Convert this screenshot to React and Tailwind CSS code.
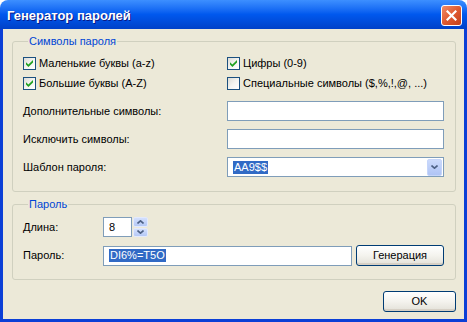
import React from "react";

const Check = ({ checked }) => (
  <span className="w-[13px] h-[13px] shrink-0 border border-[#1C5180] bg-gradient-to-br from-[#DCDCD7] via-[#F4F4F0] to-white flex items-center justify-center">
    {checked && (
      <svg width="7" height="7" viewBox="0 0 7 7">
        <path d="M0 2.2 L2.4 4.4 L7 0 V2.4 L2.4 7 L0 4.6 Z" fill="#21A121" />
      </svg>
    )}
  </span>
);

const CheckRow = ({ checked, label }) => (
  <div className="h-[20px] flex items-center gap-[3px]">
    <Check checked={checked} />
    <span className="leading-[13px] whitespace-nowrap">{label}</span>
  </div>
);

const TextBox = ({ children, className = "" }) => (
  <div
    className={`h-[20px] border border-[#7F9DB9] bg-white flex items-center pl-[5px] ${className}`}
  >
    {children}
  </div>
);

const Selected = ({ children }) => (
  <span className="bg-[#316AC5] text-white leading-[13px] px-[1px]">
    {children}
  </span>
);

const XpButton = ({ children, className = "" }) => (
  <button
    className={`h-[21px] border border-[#003C74] rounded-[3px] bg-gradient-to-b from-white via-[#F4F3EE] to-[#E3E1D8] shadow-[inset_0_-2px_0_#D6D0C5] text-[11px] leading-[13px] text-black ${className}`}
  >
    {children}
  </button>
);

const Chevron = ({ up }) => (
  <svg width="7" height="4" viewBox="0 0 7 4">
    <path
      d={up ? "M0.5 3.5 L3.5 0.8 L6.5 3.5" : "M0.5 0.5 L3.5 3.2 L6.5 0.5"}
      fill="none"
      stroke="#4D6185"
      strokeWidth="1.6"
    />
  </svg>
);

export default function App() {
  return (
    <div className="w-[467px] h-[322px] bg-white font-['Liberation_Sans',Arial,sans-serif]">
      <div className="h-full flex flex-col">
        {/* title bar */}
        <div className="h-[29px] shrink-0 rounded-t-[8px] bg-gradient-to-b from-[#3D8FFF] via-[#0058EE] to-[#0041C8] flex items-start justify-between pl-[7px] pr-[5px]">
          <span className="mt-[8px] text-[13px] leading-[15px] font-bold text-white [text-shadow:1px_1px_0_#0A1883]">
            Генератор паролей
          </span>
          <div className="mt-[5px] w-[21px] h-[21px] rounded-[3px] border border-white bg-gradient-to-br from-[#F08B66] via-[#E05A30] to-[#C4401A] flex items-center justify-center">
            <svg width="11" height="11" viewBox="0 0 11 11">
              <path d="M1.5 1.5 L9.5 9.5 M9.5 1.5 L1.5 9.5" stroke="white" strokeWidth="2.2" strokeLinecap="square" />
            </svg>
          </div>
        </div>

        {/* body */}
        <div className="flex-1 bg-[#ECE9D8] border-x-[3px] border-b-[3px] border-[#0B3FD6] flex flex-col pl-[9px] pr-[8px] pt-[6px] text-[11px] text-black">
          <fieldset className="border border-[#D0D0BF] rounded-[3px] pl-[10px] pr-[11px] pt-[5px] pb-[14px]">
            <legend className="ml-[5px] px-[1px] leading-[13px] text-[#0046D5]">
              Символы пароля
            </legend>
            <div className="grid grid-cols-[204px_1fr]">
              <CheckRow checked label="Маленькие буквы (a-z)" />
              <CheckRow checked label="Цифры (0-9)" />
              <CheckRow checked label="Большие буквы (A-Z)" />
              <CheckRow label="Специальные символы ($,%,!,@, ...)" />
            </div>
            <div className="grid grid-cols-[204px_1fr] gap-y-[8px] mt-[8px] items-center">
              <span>Дополнительные символы:</span>
              <TextBox />
              <span>Исключить символы:</span>
              <TextBox />
              <span>Шаблон пароля:</span>
              <TextBox className="justify-between pr-[1px]">
                <Selected>AA9$$</Selected>
                <div className="w-[15px] h-[17px] rounded-[2px] border border-[#C5D5FA] bg-gradient-to-b from-[#CCDAFC] to-[#AFC4F5] flex items-center justify-center">
                  <Chevron />
                </div>
              </TextBox>
            </div>
          </fieldset>

          <fieldset className="mt-[6px] border border-[#D0D0BF] rounded-[3px] pl-[10px] pr-[11px] pt-[6px] pb-[13px]">
            <legend className="ml-[5px] px-[1px] leading-[13px] text-[#0046D5]">
              Пароль
            </legend>
            <div className="grid grid-cols-[80px_1fr] gap-y-[8px] items-center">
              <span>Длина:</span>
              <div className="flex items-center gap-[1px]">
                <TextBox className="w-[29px]">8</TextBox>
                <div className="w-[15px] h-[20px] flex flex-col gap-[1px]">
                  <div className="flex-1 rounded-[2px] border border-[#E3EAFD] bg-gradient-to-b from-[#D3DFFD] to-[#B5C9F6] flex items-center justify-center">
                    <Chevron up />
                  </div>
                  <div className="flex-1 rounded-[2px] border border-[#E3EAFD] bg-gradient-to-b from-[#D3DFFD] to-[#B5C9F6] flex items-center justify-center">
                    <Chevron />
                  </div>
                </div>
              </div>
              <span>Пароль:</span>
              <div className="flex items-center gap-[4px]">
                <TextBox className="flex-1">
                  <Selected>DI6%=T5O</Selected>
                </TextBox>
                <XpButton className="w-[88px]">Генерация</XpButton>
              </div>
            </div>
          </fieldset>

          <div className="flex justify-end mt-[11px]">
            <XpButton className="w-[73px]">OK</XpButton>
          </div>
        </div>
      </div>
    </div>
  );
}
